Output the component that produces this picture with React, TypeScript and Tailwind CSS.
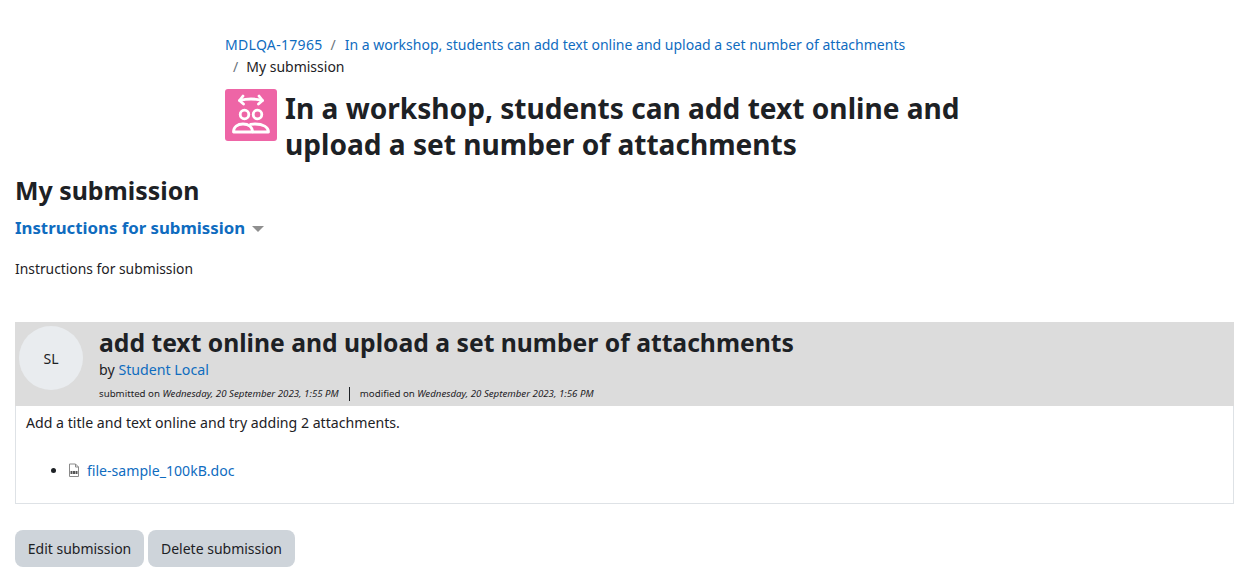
import React from 'react';

const FONT = "font-['Noto_Sans',sans-serif]";

const ActivityIcon = () => (
  <div className="w-[52px] h-[52px] shrink-0 rounded-[3px] bg-[#ee65a6]">
    <svg width="52" height="52" viewBox="0 0 52 52" fill="none" stroke="#fff" strokeWidth="2.800" strokeLinecap="round" strokeLinejoin="round">
      <path d="M14.500 11.500Q26 8.500 37.500 11.500" />
      <path d="M18 7 14.500 11.500l4 3.500M34 7l3.500 4.500-4 3.500" />
      <circle cx="19.500" cy="25.500" r="4.300" />
      <circle cx="32.500" cy="25.500" r="4.300" />
      <path d="M8.500 43c0-5 4-8 9.500-8s9.500 3 9.500 8z" />
      <path d="M25.500 35.300c1.500-.3 3-.3 4.500-.3 8 0 13.500 3 13.500 8H28" />
    </svg>
  </div>
);

const DocIcon = () => (
  <svg width="12" height="14" viewBox="0 0 12 14" fill="none" className="shrink-0 mt-[3px]">
    <path d="M1.500 1h6l3 3v9.500h-9z" stroke="#8a8a8a" strokeWidth="1" />
    <path d="M7.500 1v3h3" stroke="#8a8a8a" strokeWidth="1" />
    <path d="M2.500 8h2v3h-2zM5 8h2v3H5zM7.500 8h2v3h-2z" fill="#555" />
  </svg>
);

export default function App() {
  return (
    <div className={`${FONT} h-[581px] overflow-hidden bg-white text-[14px] leading-[21px] text-[#1d2125]`}>
      <header className="mx-auto w-[802px] pt-[34px]">
        <nav className="h-[44px]">
          <div className="flex items-center h-[21px] text-[14.030px]">
            <a className="text-[#0f6cbf] tracking-[0.3px]">MDLQA-17965</a>
            <span className="pl-[8px] pr-[9px] text-[#6a737b]">/</span>
            <a className="text-[#0f6cbf]">In a workshop, students can add text online and upload a set number of attachments</a>
          </div>
          <div className="flex items-center h-[22px]">
            <span className="pl-2 pr-2 text-[#6a737b]">/</span>
            <span>My submission</span>
          </div>
        </nav>
        <div className="flex items-start gap-2 mt-[11px]">
          <ActivityIcon />
          <h1 className="w-[700px] pt-px text-[28.100px] leading-[36px] font-bold">In a workshop, students can add text online and upload a set number of attachments</h1>
        </div>
      </header>

      <main className="px-[15px]">
        <h2 className="mt-[10px] text-[24.900px] leading-[36px] font-bold">My submission</h2>
        <div className="flex items-center mt-[8px] h-[24px]">
          <span className="text-[16.800px] leading-[24px] font-bold text-[#0f6cbf]">Instructions for submission</span>
          <span className="ml-[7px] mt-[2px] w-0 h-0 border-x-[6px] border-x-transparent border-t-[6px] border-t-[#8f8f8f]" />
        </div>
        <p className="mt-[18px] text-[13.850px]">Instructions for submission</p>

        <section className="mt-[43px] mr-[3px] border border-[#dee2e6] border-t-0">
          <div className="flex -mx-px bg-[#dcdcdc] h-[84px]">
            <div className="ml-[4px] mt-[4px] w-[64px] h-[64px] rounded-full bg-[#e9ecef] flex items-center justify-center">SL</div>
            <div className="ml-[16px]">
              <h3 className="text-[24.700px] leading-[36px] mt-[3px] font-bold">add text online and upload a set number of attachments</h3>
              <div className="leading-[21px] -mt-[2px] text-[14.200px]">by <a className="text-[#0f6cbf]">Student Local</a></div>
              <div className="flex items-center mt-[6px] text-[9.700px] leading-[15px]">
                <span>submitted on <em>Wednesday, 20 September 2023, 1:55 PM</em></span>
                <span className="mx-[10px] w-px h-[14px] bg-[#1d2125]" />
                <span>modified on <em>Wednesday, 20 September 2023, 1:56 PM</em></span>
              </div>
            </div>
          </div>
          <div className="h-[97px] px-[10px] pt-[6px]">
            <p className="text-[14.150px]">Add a title and text online and try adding 2 attachments.</p>
            <ul className="mt-[27px] pl-[42px] list-disc">
              <li className="h-[21px]">
                <span className="inline-flex items-start gap-[7px] align-top h-[21px]">
                  <DocIcon />
                  <a className="text-[#0f6cbf] text-[14.100px]">file-sample_100kB.doc</a>
                </span>
              </li>
            </ul>
          </div>
        </section>

        <div className="flex gap-1 mt-[26px]">
          <button className="h-[37px] w-[129px] rounded-lg bg-[#ced4da]">Edit submission</button>
          <button className="h-[37px] w-[147px] rounded-lg bg-[#ced4da]">Delete submission</button>
        </div>
      </main>
    </div>
  );
}
